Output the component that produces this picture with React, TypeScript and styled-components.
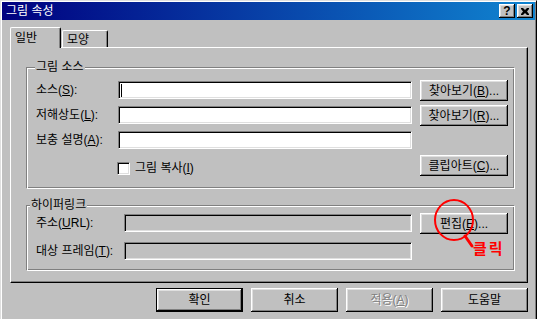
import styled, { createGlobalStyle } from 'styled-components';

const GlobalStyle = createGlobalStyle`
  html, body {
    margin: 0;
    padding: 0;
    background: #c0c0c0;
    overflow: hidden;
  }
  body {
    font-family: 'Liberation Sans', 'Noto Sans CJK KR', sans-serif;
    font-size: 12px;
    line-height: 14px;
    color: #000;
  }
`;

const raised = `
  box-shadow: inset -1px -1px 0 #000, inset 1px 1px 0 #fff,
    inset -2px -2px 0 #808080, inset 2px 2px 0 #dfdfdf;
`;

const sunken = `
  border-top: 1px solid #808080;
  border-left: 1px solid #808080;
  border-bottom: 1px solid #fff;
  border-right: 1px solid #fff;
  box-shadow: inset 1px 1px 0 #000, inset -1px -1px 0 #dfdfdf;
`;

const Window = styled.div`
  position: relative;
  box-sizing: border-box;
  width: 537px;
  height: 319px;
  padding: 1px 1px 0 1px;
  border-top: 1px solid #dfdfdf;
  border-left: 1px solid #dfdfdf;
  border-right: 1px solid #000;
  box-shadow: inset 1px 1px 0 #fff, inset -1px 0 0 #808080;
  background: #c0c0c0;
  overflow: hidden;
`;

const TitleBar = styled.div`
  display: flex;
  align-items: center;
  height: 18px;
  padding: 0 2px 0 4px;
  background: linear-gradient(to right, #000080, #1084d0);
  color: #fff;
`;

const TitleText = styled.div`
  flex: 1;
  font-size: 12px;
`;

const TitleButton = styled.div`
  display: flex;
  align-items: center;
  justify-content: center;
  width: 16px;
  height: 14px;
  margin-left: 2px;
  background: #c0c0c0;
  color: #000;
  font-weight: bold;
  font-size: 12px;
  ${raised}
`;

const TabRow = styled.div`
  display: flex;
  align-items: flex-end;
  height: 20px;
  margin: 7px 0 0 8px;
`;

const Tab = styled.div<{ $active?: boolean }>`
  position: relative;
  z-index: 1;
  display: flex;
  align-items: center;
  box-sizing: border-box;
  width: ${p => (p.$active ? 51 : 46)}px;
  height: ${p => (p.$active ? 21 : 17)}px;
  margin-bottom: ${p => (p.$active ? -1 : 0)}px;
  margin-left: ${p => (p.$active ? 0 : 1)}px;
  padding-left: 4px;
  padding-top: ${p => (p.$active ? 0 : 1)}px;
  background: #c0c0c0;
  border-top: 1px solid #fff;
  border-left: 1px solid #fff;
  border-right: 1px solid #000;
  border-top-left-radius: 2px;
  border-top-right-radius: 2px;
  box-shadow: inset -1px 0 0 #808080;
`;

const Panel = styled.div`
  box-sizing: border-box;
  width: 518px;
  margin-left: 8px;
  padding: 19px 12px 11px 15px;
  border-top: 1px solid #fff;
  border-left: 1px solid #fff;
  border-right: 1px solid #000;
  border-bottom: 1px solid #000;
  box-shadow: inset -1px -1px 0 #808080;
`;

const Group = styled.div<{ $top: number; $pt: number; $pb: number }>`
  position: relative;
  margin-top: ${p => p.$top}px;
  padding: ${p => p.$pt}px 0 ${p => p.$pb}px 9px;
  border-top: 1px solid #808080;
  border-left: 1px solid #808080;
  border-bottom: 1px solid #fff;
  border-right: 1px solid #fff;
  box-shadow: inset 1px 1px 0 #fff, inset -1px -1px 0 #808080;
`;

const Legend = styled.span<{ $left: number }>`
  position: absolute;
  top: -8px;
  left: ${p => p.$left}px;
  padding: 0 1px;
  background: #c0c0c0;
`;

const Grid = styled.div<{ $label: number; $field: number; $rows: string; $gap: number }>`
  display: grid;
  grid-template-columns: ${p => p.$label}px ${p => p.$field}px 88px;
  grid-template-rows: ${p => p.$rows};
  column-gap: 8px;
  row-gap: ${p => p.$gap}px;
`;

const Label = styled.div`
  grid-column: 1;
  align-self: center;
  white-space: nowrap;
`;

const Field = styled.div<{ $disabled?: boolean }>`
  grid-column: 2;
  display: flex;
  align-items: center;
  box-sizing: border-box;
  height: 18px;
  padding-left: 2px;
  background: ${p => (p.$disabled ? '#c0c0c0' : '#fff')};
  ${sunken}
`;

const Caret = styled.span`
  width: 1px;
  height: 13px;
  background: #000;
`;

const SideButton = styled.div`
  grid-column: 3;
  align-self: start;
  display: flex;
  align-items: center;
  justify-content: center;
  height: 21px;
  margin-top: -1px;
  background: #c0c0c0;
  white-space: nowrap;
  ${raised}
`;

const CheckRow = styled.div`
  grid-column: 2;
  align-self: start;
  display: flex;
  align-items: center;
  gap: 5px;
  margin-top: 5px;
  margin-left: -1px;
`;

const CheckBox = styled.div`
  box-sizing: border-box;
  width: 13px;
  height: 13px;
  background: #fff;
  ${sunken}
`;

const ButtonRow = styled.div`
  display: flex;
  justify-content: flex-end;
  gap: 8px;
  width: 518px;
  margin: 5px 0 0 8px;
`;

const DialogButton = styled.div<{ $default?: boolean; $disabled?: boolean }>`
  display: flex;
  align-items: center;
  justify-content: center;
  box-sizing: border-box;
  width: 87px;
  height: 24px;
  background: #c0c0c0;
  border: ${p => (p.$default ? '1px solid #000' : 'none')};
  color: ${p => (p.$disabled ? '#808080' : '#000')};
  text-shadow: ${p => (p.$disabled ? '1px 1px 0 #fff' : 'none')};
  ${raised}
`;

const Mark = styled.svg`
  position: absolute;
  left: 429px;
  top: 195px;
  overflow: visible;
`;

const MarkText = styled.span`
  position: absolute;
  left: 472px;
  top: 238px;
  color: #ff0000;
  font-family: 'Noto Sans CJK KR', sans-serif;
  font-weight: bold;
  font-size: 15px;
  line-height: 18px;
  letter-spacing: 2px;
`;

export default function App() {
  return (
    <>
      <GlobalStyle />
      <Window>
        <TitleBar>
          <TitleText>그림 속성</TitleText>
          <TitleButton>?</TitleButton>
          <TitleButton>
            <svg width="8" height="7" viewBox="0 0 8 7">
              <path d="M0 0h2l2 2 2-2h2v1L6 3.5 8 6v1H6L4 5 2 7H0V6l2-2.5L0 1z" fill="#000" />
            </svg>
          </TitleButton>
        </TitleBar>

        <TabRow>
          <Tab $active>일반</Tab>
          <Tab>모양</Tab>
        </TabRow>

        <Panel>
          <Group $top={0} $pt={13} $pb={11}>
            <Legend $left={8}>그림 소스</Legend>
            <Grid $label={74} $field={294} $rows="18px 18px 18px 21px" $gap={7}>
              <Label>소스(<u>S</u>):</Label>
              <Field><Caret /></Field>
              <SideButton>찾아보기(<u>B</u>)...</SideButton>

              <Label>저해상도(<u>L</u>):</Label>
              <Field />
              <SideButton>찾아보기(<u>R</u>)...</SideButton>

              <Label>보충 설명(<u>A</u>):</Label>
              <Field />

              <CheckRow>
                <CheckBox />
                <span>그림 복사(<u>I</u>)</span>
              </CheckRow>
              <SideButton>클립아트(<u>C</u>)...</SideButton>
            </Grid>
          </Group>

          <Group $top={16} $pt={8} $pb={10}>
            <Legend $left={3}>하이퍼링크</Legend>
            <Grid $label={80} $field={288} $rows="18px 18px" $gap={10}>
              <Label>주소(<u>U</u>RL):</Label>
              <Field $disabled />
              <SideButton>편집(<u>E</u>)...</SideButton>

              <Label>대상 프레임(<u>T</u>):</Label>
              <Field $disabled />
            </Grid>
          </Group>
        </Panel>

        <ButtonRow>
          <DialogButton $default>확인</DialogButton>
          <DialogButton>취소</DialogButton>
          <DialogButton $disabled>적용(<u>A</u>)</DialogButton>
          <DialogButton>도움말</DialogButton>
        </ButtonRow>

        <Mark width="50" height="56" viewBox="0 0 50 56">
          <ellipse cx="24" cy="24" rx="19" ry="20" fill="none" stroke="#ff0000" strokeWidth="2" />
          <path d="M35 40 L42 50" stroke="#ff0000" strokeWidth="3" strokeLinecap="round" />
        </Mark>
        <MarkText>클릭</MarkText>
      </Window>
    </>
  );
}
